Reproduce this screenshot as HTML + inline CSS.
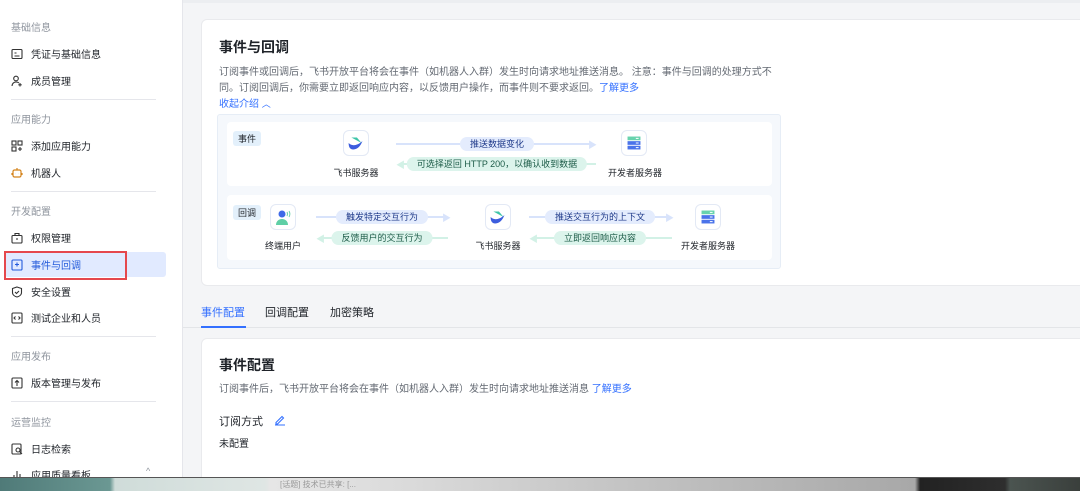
<!DOCTYPE html>
<html><head><meta charset="utf-8"><style>
*{margin:0;padding:0;box-sizing:border-box}
body{width:1080px;height:491px;overflow:hidden;position:relative;background:#f4f5f7;font-family:"Liberation Sans","Noto Sans CJK SC",sans-serif;color:#1f2329}
.a{position:absolute;white-space:nowrap}
#side{position:absolute;left:0;top:0;width:183px;height:478px;background:#fff;border-right:1px solid #e5e6eb}
.lab{position:absolute;left:11px;font-size:10px;color:#8f959e}
.it{position:absolute;left:11px;font-size:10px;color:#1f2329;display:flex;align-items:center}
.it svg{width:12px;height:12px;margin-right:8px}
.dv{position:absolute;left:11px;width:145px;height:1px;background:#e5e6eb}
.card{position:absolute;background:#fff;border-radius:6px}
.desc{font-size:10px;color:#646a73}
.blue{color:#3370ff}
.pill{position:absolute;height:14px;line-height:14px;font-size:9px;padding:0 10px;border-radius:7px;transform:translateX(-50%);white-space:nowrap}
.pb{background:#e4ecfd;color:#1f3a8a}
.pg{background:#dcf4ec;color:#1d5c48}
.ln{position:absolute;height:2px}
.lb{background:#d8e3fb}.lg{background:#d2f1e6}
.ic{position:absolute;width:26px;height:26px;border:1px solid #e3e9f5;border-radius:6px;background:#fff}
.nm{position:absolute;font-size:9px;transform:translateX(-50%);white-space:nowrap}
.tag{position:absolute;font-size:9px;background:#e3f0fb;color:#1f2329;padding:1px 5px;border-radius:3px}
</style></head><body>
<div id="side">
<div class="lab" style="top:19px">基础信息</div>
<div class="it" style="top:46px"><svg viewBox="0 0 12 12" fill="none" stroke="#333" stroke-width="1.1"><rect x="1" y="1.5" width="10" height="9" rx="1"/><path d="M3.5 5h2M3.5 8h5"/></svg>凭证与基础信息</div>
<div class="it" style="top:73px"><svg viewBox="0 0 12 12" fill="none" stroke="#333" stroke-width="1.1"><circle cx="5" cy="3.5" r="2.3"/><path d="M1 11c0-2.5 2-4 4-4s2.5.5 3 1M9 8v3.5M7.3 9.8h3.4"/></svg>成员管理</div>
<div class="dv" style="top:99px"></div>
<div class="lab" style="top:111px">应用能力</div>
<div class="it" style="top:138px"><svg viewBox="0 0 12 12" fill="none" stroke="#333" stroke-width="1.1"><rect x="1" y="1" width="4" height="4"/><rect x="7" y="1" width="4" height="4"/><rect x="1" y="7" width="4" height="4"/><path d="M9 7v4M7 9h4"/></svg>添加应用能力</div>
<div class="it" style="top:165px"><svg viewBox="0 0 12 12" fill="none" stroke="#d4831b" stroke-width="1.2"><rect x="2" y="3" width="8" height="7" rx="1.5"/><path d="M6 1v2M1 6v2M11 6v2M4.5 6.5h.1M7.5 6.5h.1"/></svg>机器人</div>
<div class="dv" style="top:191px"></div>
<div class="lab" style="top:203px">开发配置</div>
<div class="it" style="top:230px"><svg viewBox="0 0 12 12" fill="none" stroke="#333" stroke-width="1.1"><rect x="1" y="3.5" width="10" height="7.5" rx="1"/><path d="M4 3.5V1.5h4v2M6 6v2"/></svg>权限管理</div>
<div style="position:absolute;left:5px;top:252px;width:161px;height:25px;background:#e1eaff;border-radius:3px"></div>
<div style="position:absolute;left:4px;top:251px;width:123px;height:29px;border:2px solid #e5484d"></div>
<div class="it" style="top:257px;color:#245bdb"><svg viewBox="0 0 12 12" fill="none" stroke="#245bdb" stroke-width="1.1"><rect x="1" y="1" width="10" height="10" rx="1"/><path d="M6 3.5v4M4 5.5h4"/></svg>事件与回调</div>
<div class="it" style="top:284px"><svg viewBox="0 0 12 12" fill="none" stroke="#333" stroke-width="1.1"><path d="M6 1l4.5 1.5v4C10.5 9 8 10.5 6 11 4 10.5 1.5 9 1.5 6.5v-4z"/><path d="M4 6l1.5 1.5L8 5"/></svg>安全设置</div>
<div class="it" style="top:310px"><svg viewBox="0 0 12 12" fill="none" stroke="#333" stroke-width="1.1"><rect x="1" y="1" width="10" height="10" rx="1"/><path d="M4.5 4.5L3 6l1.5 1.5M7.5 4.5L9 6 7.5 7.5"/></svg>测试企业和人员</div>
<div class="dv" style="top:336px"></div>
<div class="lab" style="top:348px">应用发布</div>
<div class="it" style="top:375px"><svg viewBox="0 0 12 12" fill="none" stroke="#333" stroke-width="1.1"><rect x="1" y="1" width="10" height="10" rx="1"/><path d="M6 9V3.5M4 5.5l2-2 2 2"/></svg>版本管理与发布</div>
<div class="dv" style="top:401px"></div>
<div class="lab" style="top:414px">运营监控</div>
<div class="it" style="top:441px"><svg viewBox="0 0 12 12" fill="none" stroke="#333" stroke-width="1.1"><rect x="1" y="1" width="9" height="10" rx="1"/><circle cx="7" cy="7" r="2"/><path d="M8.5 8.5L11 11"/></svg>日志检索</div>
<div class="it" style="top:467px"><svg viewBox="0 0 12 12" fill="none" stroke="#333" stroke-width="1.1"><path d="M1 11h10M3 11V6M6 11V2M9 11V5"/></svg>应用质量看板</div>
<div class="a" style="left:146px;top:466px;font-size:9px;color:#8f959e">^</div>
</div>
<div style="position:absolute;left:183px;top:0;width:897px;height:3px;background:#eceef1"></div>

<div class="card" style="left:201px;top:19px;width:890px;height:267px;border:1px solid #e9eaed"></div>
<div class="a" style="left:219px;top:37px;font-size:14px;font-weight:bold">事件与回调</div>
<div class="a desc" style="left:219px;top:63px">订阅事件或回调后，飞书开放平台将会在事件（如机器人入群）发生时向请求地址推送消息。 注意：事件与回调的处理方式不</div>
<div class="a desc" style="left:219px;top:79px">同。订阅回调后，你需要立即返回响应内容，以反馈用户操作，而事件则不要求返回。<span class="blue">了解更多</span></div>
<div class="a blue" style="left:219px;top:95px;font-size:10px">收起介绍 <span style="font-size:9px">︿</span></div>

<div style="position:absolute;left:217px;top:114px;width:564px;height:155px;background:#f5f8fc;border:1px solid #e6edf6;border-radius:3px"></div>
<div style="position:absolute;left:227px;top:122px;width:545px;height:64px;background:#fff;border-radius:4px"></div>
<div style="position:absolute;left:227px;top:195px;width:545px;height:65px;background:#fff;border-radius:4px"></div>
<div class="tag" style="left:233px;top:131px">事件</div>
<div class="tag" style="left:233px;top:205px">回调</div>

<svg width="0" height="0" style="position:absolute"><defs>
<symbol id="fs" viewBox="0 0 26 26"><path d="M8 7h6l5 6z" fill="#3ec5a8"/><path d="M5 13c3 3 8 4 15-2-2 5-5 9-10 9-3 0-5-2-5-7z" fill="#3c5dde"/></symbol>
<symbol id="sv" viewBox="0 0 26 26"><rect x="6" y="6" width="14" height="4" fill="#68d3ad"/><rect x="6" y="11" width="14" height="4" fill="#4a73ea"/><rect x="6" y="16" width="14" height="4" fill="#4a73ea"/><path d="M15 8h3M15 13h3M15 18h3" stroke="#fff" stroke-width="1"/></symbol>
</defs></svg>

<div class="ic" style="left:343px;top:130px"><svg width="24" height="24"><use href="#fs"/></svg></div>
<div class="nm" style="left:356px;top:166px">飞书服务器</div>
<div class="ic" style="left:621px;top:130px"><svg width="24" height="24"><use href="#sv"/></svg></div>
<div class="nm" style="left:635px;top:166px">开发者服务器</div>
<div class="ln lb" style="left:396px;top:143px;width:194px"></div><div class="a" style="left:588px;top:138px;color:#d8e3fb;font-size:9px">▶</div>
<div class="pill pb" style="left:497px;top:137px">推送数据变化</div>
<div class="ln lg" style="left:402px;top:163px;width:194px"></div><div class="a" style="left:396px;top:158px;color:#d2f1e6;font-size:9px">◀</div>
<div class="pill pg" style="left:497px;top:157px">可选择返回 HTTP 200，以确认收到数据</div>

<div class="ic" style="left:270px;top:204px"><svg width="24" height="24" viewBox="0 0 24 24"><circle cx="11" cy="9" r="3.5" fill="#3f6ae8"/><path d="M5 20c0-4 3-6 6-6s6 2 6 6z" fill="#5fcfa6"/><path d="M16 7q1 2 0 4M18 6q1.8 3 0 6" stroke="#5fcfa6" fill="none" stroke-width=".9"/></svg></div>
<div class="nm" style="left:283px;top:239px">终端用户</div>
<div class="ic" style="left:485px;top:204px"><svg width="24" height="24"><use href="#fs"/></svg></div>
<div class="nm" style="left:498px;top:239px">飞书服务器</div>
<div class="ic" style="left:695px;top:204px"><svg width="24" height="24"><use href="#sv"/></svg></div>
<div class="nm" style="left:708px;top:239px">开发者服务器</div>
<div class="ln lb" style="left:316px;top:216px;width:128px"></div><div class="a" style="left:442px;top:211px;color:#d8e3fb;font-size:9px">▶</div>
<div class="pill pb" style="left:382px;top:210px">触发特定交互行为</div>
<div class="ln lg" style="left:322px;top:237px;width:126px"></div><div class="a" style="left:316px;top:232px;color:#d2f1e6;font-size:9px">◀</div>
<div class="pill pg" style="left:382px;top:231px">反馈用户的交互行为</div>
<div class="ln lb" style="left:529px;top:216px;width:138px"></div><div class="a" style="left:665px;top:211px;color:#d8e3fb;font-size:9px">▶</div>
<div class="pill pb" style="left:600px;top:210px">推送交互行为的上下文</div>
<div class="ln lg" style="left:535px;top:237px;width:137px"></div><div class="a" style="left:529px;top:232px;color:#d2f1e6;font-size:9px">◀</div>
<div class="pill pg" style="left:600px;top:231px">立即返回响应内容</div>

<div class="a" style="left:201px;top:304px;font-size:11px;color:#3370ff">事件配置</div>
<div class="a" style="left:265px;top:304px;font-size:11px;color:#1f2329">回调配置</div>
<div class="a" style="left:330px;top:304px;font-size:11px;color:#1f2329">加密策略</div>
<div style="position:absolute;left:183px;top:327px;width:897px;height:1px;background:#e3e5e8"></div>
<div style="position:absolute;left:201px;top:326px;width:45px;height:2px;background:#3370ff"></div>

<div class="card" style="left:201px;top:338px;width:890px;height:150px;border:1px solid #e9eaed"></div>
<div class="a" style="left:219px;top:355px;font-size:14px;font-weight:bold">事件配置</div>
<div class="a desc" style="left:219px;top:380px">订阅事件后，飞书开放平台将会在事件（如机器人入群）发生时向请求地址推送消息 <span class="blue">了解更多</span></div>
<div class="a" style="left:219px;top:413px;font-size:11px">订阅方式</div>
<svg class="a" style="left:274px;top:414px" width="12" height="12" viewBox="0 0 12 12" fill="none" stroke="#3370ff" stroke-width="1.1"><path d="M2 8.5L8 2.5l1.5 1.5-6 6H2zM1 11h10"/></svg>
<div class="a" style="left:219px;top:435px;font-size:10px">未配置</div>

<div style="position:absolute;left:0;top:478px;width:1080px;height:13px;background:linear-gradient(90deg,#4f7a78 0,#6b9893 110px,#cfdcd9 115px,#dfe6e4 265px,#e6e6e6 270px,#dadada 410px,#c6c6c6 600px,#a8a8a8 915px,#222 920px,#2e2e2e 1005px,#4b5450 1010px,#3a3f3c 1080px)"></div>
<div style="position:absolute;left:0;top:477px;width:1080px;height:1px;background:#555"></div>
<div class="a" style="left:280px;top:479px;font-size:8px;color:#999">[话题] 技术已共享: [...</div>
</body></html>
